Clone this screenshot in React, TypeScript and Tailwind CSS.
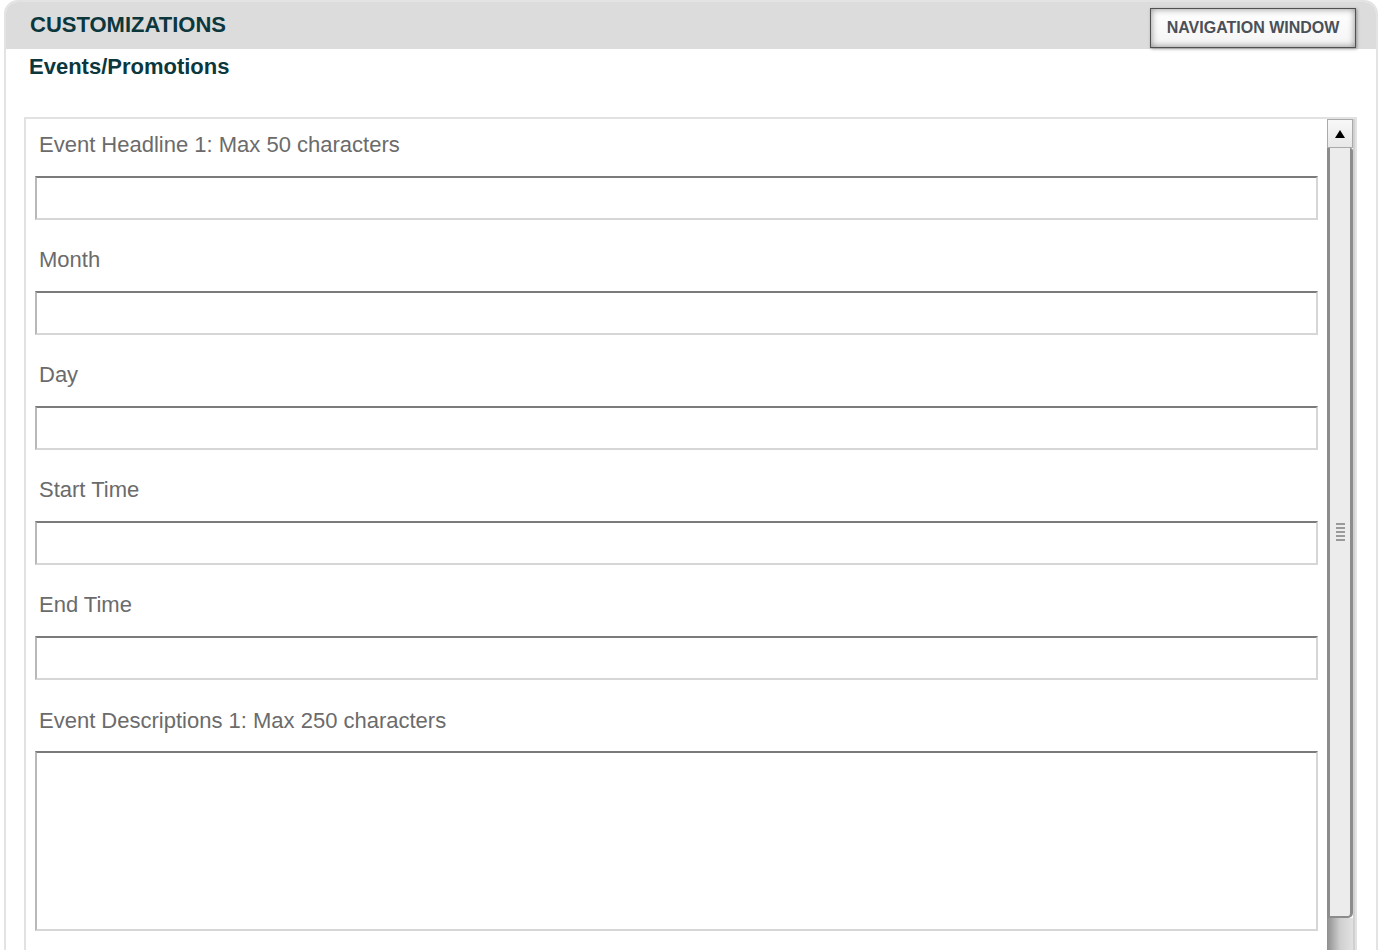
import React from "react";

const fields = ["Event Headline 1: Max 50 characters", "Month", "Day", "Start Time", "End Time"];

function Input() {
  return (
    <div className="h-[44px] w-full border-2 border-t-[#7b7b7b] border-l-[#b8b8b8] border-r-[#d6d6d6] border-b-[#d6d6d6] bg-white" />
  );
}

export default function App() {
  return (
    <div
      className="h-[950px] w-[1378px] overflow-hidden bg-white"
      style={{ fontFamily: '"Liberation Sans", Arial, Helvetica, sans-serif' }}
    >
      <div className="ml-[4px] w-[1374px] h-[1000px] rounded-t-[14px] border-2 border-[#e3e3e3] overflow-hidden">
        {/* header */}
        <div className="h-[47px] bg-[#dcdcdc] flex items-start justify-between pl-[24px] pr-[20px]">
          <div className="mt-[10px] text-[22px] leading-[26px] font-bold text-[#0b373d]">CUSTOMIZATIONS</div>
          <div className="mt-[6px] h-[40px] w-[206px] border border-[#505050] bg-gradient-to-b from-white to-[#f4f4f4] shadow-[inset_0_0_7px_rgba(0,0,0,0.45),1px_1px_3px_rgba(0,0,0,0.35)] flex items-center justify-center text-[16px] font-bold text-[#4a5058]">
            NAVIGATION WINDOW
          </div>
        </div>
        {/* body */}
        <div className="pl-[18px] pr-[19px]">
          <div className="mt-[5px] pl-[5px] text-[22px] leading-[26px] font-bold text-[#0b373d]">Events/Promotions</div>
          <div className="mt-[37px] h-[860px] border-2 border-[#e2e2e2] flex">
            <div className="flex-1 pl-[9px] pr-[9px] pt-[13px]">
              {fields.map((f) => (
                <div key={f} className="pb-[27px]">
                  <div className="pl-[4px] text-[22px] leading-[26px] text-[#6b6b6b]">{f}</div>
                  <div className="mt-[18px]">
                    <Input />
                  </div>
                </div>
              ))}
              <div>
                <div className="pl-[4px] text-[22px] leading-[26px] text-[#6b6b6b] mt-[1px]">
                  Event Descriptions 1: Max 250 characters
                </div>
                <div className="mt-[17px] h-[180px] w-full border-2 border-t-[#7b7b7b] border-l-[#b8b8b8] border-r-[#d6d6d6] border-b-[#d6d6d6] bg-white" />
              </div>
            </div>
            {/* scrollbar */}
            <div className="w-[28px] flex flex-col border-r-2 border-[#d0d0d0]">
              <div className="h-[29px] border border-[#aaaaaa] bg-gradient-to-b from-[#f8f8f8] to-[#e8e8e8] flex items-center justify-center">
                <div className="w-0 h-0 border-l-[5px] border-r-[5px] border-b-[8px] border-l-transparent border-r-transparent border-b-black" />
              </div>
              <div className="h-[770px] border-l-[3px] border-r-[3px] border-b-2 border-[#8c8c8c] bg-[#ececec] rounded-br-[5px] rounded-tr-[3px] flex items-center justify-center">
                <div className="flex flex-col gap-[2px]">
                  <div className="w-[9px] h-[2px] bg-[#9a9a9a]" />
                  <div className="w-[9px] h-[2px] bg-[#9a9a9a]" />
                  <div className="w-[9px] h-[2px] bg-[#9a9a9a]" />
                  <div className="w-[9px] h-[2px] bg-[#9a9a9a]" />
                  <div className="w-[9px] h-[2px] bg-[#9a9a9a]" />
                </div>
              </div>
              <div className="flex-1 bg-gradient-to-r from-[#8e8e8e] via-[#cfcfcf] to-[#e2e2e2]" />
            </div>
          </div>
        </div>
      </div>
    </div>
  );
}
